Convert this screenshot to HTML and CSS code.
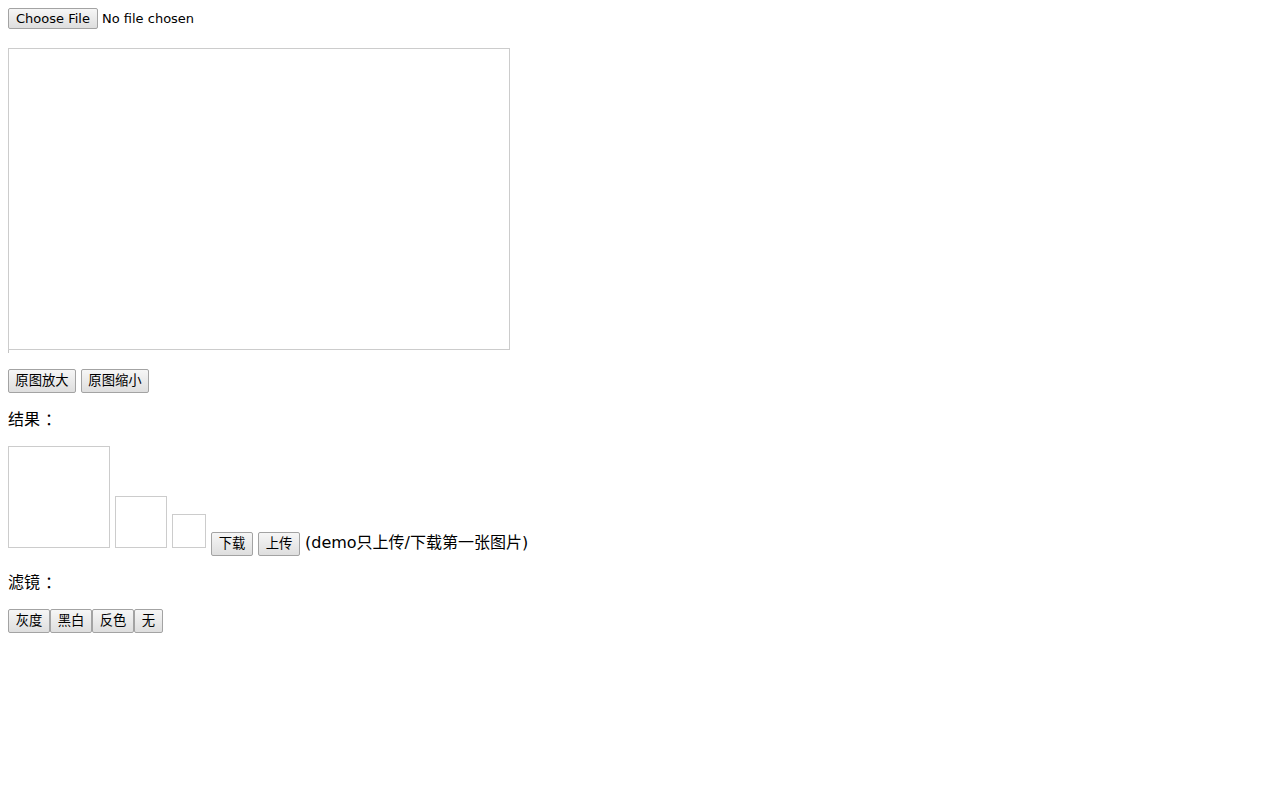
FILE: index.html
```html
<!DOCTYPE html>
<html lang="zh">
<head>
<meta charset="utf-8">
<title>裁剪</title>
<link rel="stylesheet" href="styles.css">
</head>
<body>
<div class="file-row">
  <button class="btn btn-file">Choose File</button>
  <span class="file-label">No file chosen</span>
</div>
<div class="stage"></div>
<div class="stage-tail"></div>
<div class="zoom-row">
  <button class="btn btn-cn w4">原图放大</button>
  <button class="btn btn-cn w4">原图缩小</button>
</div>
<p class="label">结果<span class="colon">：</span></p>
<div class="result-row">
  <div class="preview p100"></div>
  <div class="preview p50"></div>
  <div class="preview p32"></div>
  <button class="btn btn-cn w2">下载</button>
  <button class="btn btn-cn w2">上传</button>
  <span class="note">(demo只上传/下载第一张图片)</span>
</div>
<p class="label">滤镜<span class="colon">：</span></p>
<div class="filter-row">
  <button class="btn btn-cn w2">灰度</button>
  <button class="btn btn-cn w2">黑白</button>
  <button class="btn btn-cn w2">反色</button>
  <button class="btn btn-cn w1">无</button>
</div>
</body>
</html>
```
FILE: styles.css
```css
html, body {
  background: #fff;
}
body {
  margin: 8px;
  font-family: "DejaVu Sans", "Noto Sans CJK SC", sans-serif;
  font-size: 16px;
  color: #000;
}
.btn {
  box-sizing: border-box;
  margin: 0;
  padding: 0;
  border: 1px solid #a3a3a3;
  border-radius: 2px;
  background: linear-gradient(#f6f6f6, #dedede);
  color: #000;
  font-family: "DejaVu Sans", "Noto Sans CJK SC", sans-serif;
  font-size: 13.333px;
  text-align: center;
  cursor: default;
}
.file-row {
  display: flex;
  align-items: center;
  height: 21px;
  font-size: 13px;
}
.btn-file {
  width: 90px;
  height: 21px;
  line-height: 19px;
  font-size: 13px;
}
.file-label {
  margin-left: 4px;
  line-height: 21px;
}
.stage {
  box-sizing: border-box;
  margin-top: 19px;
  width: 502px;
  height: 302px;
  border: 1px solid #cccccc;
}
.stage-tail {
  width: 1px;
  height: 3px;
  background: #c4c4c4;
}
.zoom-row {
  margin-top: 16px;
  display: flex;
  gap: 5px;
}
.btn-cn {
  height: 24px;
  line-height: 22px;
}
.w4 { width: 68px; }
.w2 { width: 42px; }
.w1 { width: 29px; }
.label {
  margin: 16px 0;
  line-height: 21px;
  height: 21px;
}
.colon {
  padding-left: 5px;
}
.result-row {
  display: flex;
  align-items: baseline;
  gap: 5px;
  height: 110px;
}
.preview {
  box-sizing: border-box;
  border: 1px solid #cccccc;
}
.p100 { width: 102px; height: 102px; }
.p50 { width: 52px; height: 52px; }
.p32 { width: 34px; height: 34px; }
.note {
  line-height: 19px;
}
.filter-row {
  display: flex;
}
```
